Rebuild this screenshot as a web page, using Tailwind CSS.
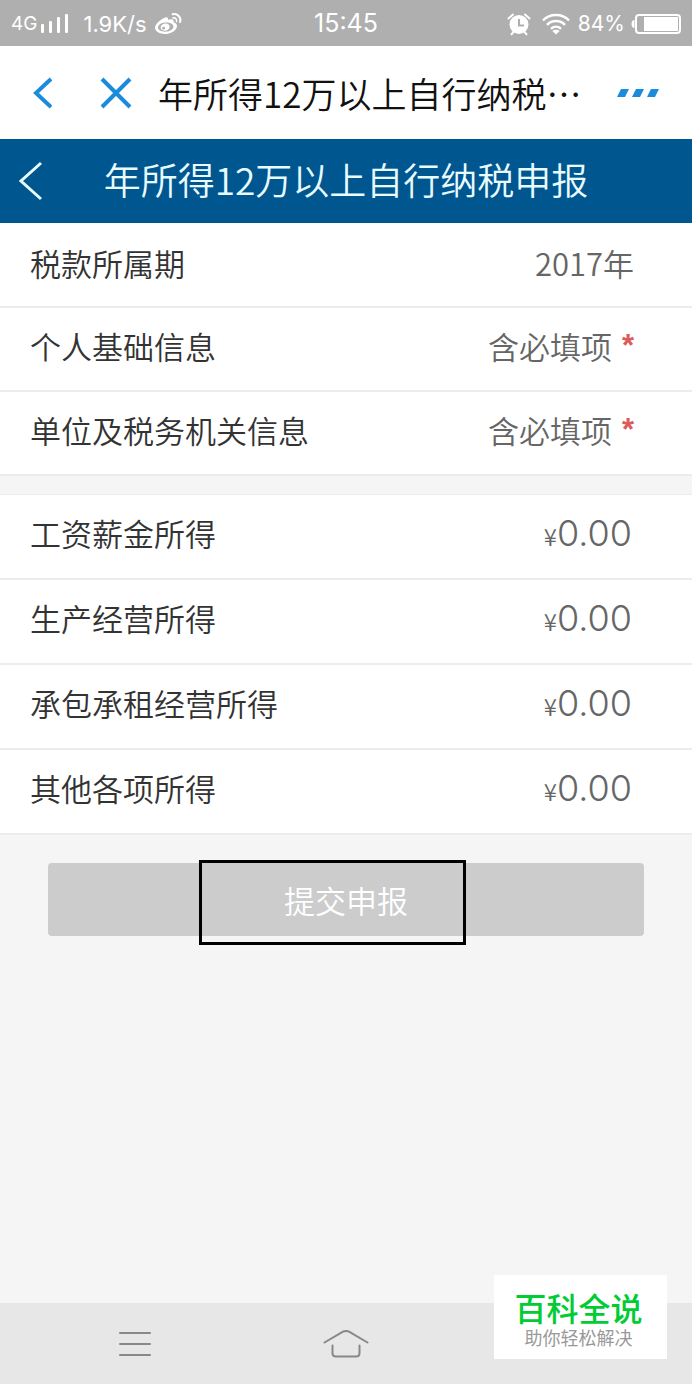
<!DOCTYPE html>
<html lang="zh-CN">
<head>
    <meta charset="UTF-8">
    <meta name="viewport" content="width=device-width, initial-scale=1.0">
    <title>年所得12万以上自行纳税申报</title>
    <script src="https://cdn.jsdelivr.net/npm/@tailwindcss/browser@4"></script>
</head>
<body class="font-['Noto_Sans_CJK_SC',sans-serif] font-[350] bg-[#f5f5f5]">
    <div class="flex flex-col min-h-screen">

        <!-- Status bar -->
        <div class="grid grid-cols-[1fr_auto_1fr] items-center h-[46px] px-[11px] pt-[2px] bg-[#afafaf] text-white font-['Inter',sans-serif] font-normal text-[22px]">
            <div class="flex items-center">
                <span class="text-[19px]">4G</span>
                <svg class="w-7 h-5 ml-1" viewBox="0 0 28 20" fill="currentColor">
                    <rect x="0" y="10" width="3" height="9" rx="1"/>
                    <rect x="8" y="7" width="3" height="12" rx="1"/>
                    <rect x="16" y="3" width="3" height="16" rx="1"/>
                    <rect x="24" y="0" width="3" height="19" rx="1"/>
                </svg>
                <span class="ml-[14px]">1.9K/s</span>
                <svg class="w-7 h-6 ml-2" viewBox="0 0 28 24" fill="none" stroke="currentColor">
                    <path fill="currentColor" stroke="none" fill-rule="evenodd" d="M9 6c2.500-1.500 4.500-.8 4 1.800 3.500-1.300 6.500-.6 5.600 2.400 3 .9 4.200 3 2.900 5.800C19.800 19.500 15.200 22 10 22 4.500 22 0 19.500 0 15.800 0 12.500 4.500 8.200 9 6ZM10.300 10.500c-4.300.3-7.600 2.700-7.300 5.300.3 2.500 3.900 4.200 8.200 3.800s7.500-2.900 7.200-5.400c-.3-2.500-3.900-4-8.100-3.700Z"/>
                    <path fill="currentColor" stroke="none" fill-rule="evenodd" d="M10.500 11.500c3 0 4.800 2 4 4.200-.8 2.300-3.500 3.500-6 2.900-2.400-.6-3.500-2.700-2.500-4.600.7-1.500 2.500-2.500 4.500-2.500ZM8.600 14.800a1.500 1.300 0 1 0 .1 2.600 1.500 1.300 0 0 0-.1-2.600Z"/>
                    <path stroke-width="2" stroke-linecap="round" d="M17.500 2.300c5-1.200 9 3 7.600 7.700"/>
                    <path stroke-width="1.500" stroke-linecap="round" d="M18 6c2.500-.6 4.200 1.300 3.500 3.600"/>
                </svg>
            </div>
            <div class="text-[25px]">15:45</div>
            <div class="flex items-center justify-end text-[21px]">
                <svg class="w-6 h-6" viewBox="0 0 24 24" fill="none" stroke="currentColor">
                    <circle cx="12" cy="12.500" r="9.500" fill="currentColor" stroke="none"/>
                    <path stroke="#afafaf" stroke-width="2" d="M12 7v6.500h5"/>
                    <path stroke-width="2" stroke-linecap="round" d="M1.500 6.500 6 2.500M22.500 6.500 18 2.500M6 20.500l-1.500 1.800M18 20.500l1.500 1.800"/>
                </svg>
                <svg class="w-7 h-6 ml-[11px]" viewBox="0 0 28 24" fill="none" stroke="currentColor" stroke-width="2.500">
                    <path d="M1 8.500c7-7.300 19-7.300 26 0M5 12.800c5-5 13-5 18 0M9 16.800c3-2.800 7-2.800 10 0"/>
                    <path fill="currentColor" stroke="none" d="M14 22.500 10.300 19c2-1.700 5.400-1.700 7.400 0Z"/>
                </svg>
                <span class="ml-2">84%</span>
                <svg class="w-[50px] h-5 ml-[6px]" viewBox="0 0 50 20" fill="none">
                    <path fill="currentColor" d="M3.500 6v8C1.500 14 .5 12.500 .5 10s1-4 3-4Z"/>
                    <rect x="5" y="1" width="44" height="18" rx="3" stroke="currentColor" stroke-width="2"/>
                    <path fill="currentColor" d="M13 3h34v14H13z"/>
                </svg>
            </div>
        </div>

        <!-- Browser title bar -->
        <header class="flex items-center h-[93px] pl-8 pr-[33px] bg-white text-[#1b8cdb]">
            <button aria-label="返回">
                <svg class="w-5 h-8" viewBox="0 0 20 32" fill="none" stroke="currentColor" stroke-width="4"><path d="M19 2 4 16l15 14"/></svg>
            </button>
            <button aria-label="关闭" class="ml-12">
                <svg class="w-8 h-8" viewBox="0 0 32 32" fill="none" stroke="currentColor" stroke-width="4"><path d="m2 2 28 28M30 2 2 30"/></svg>
            </button>
            <div class="grow ml-[26px] text-[35px] leading-none text-[#111] whitespace-nowrap">年所得12万以上自行纳税…</div>
            <button aria-label="更多">
                <svg class="w-[42px] h-2" viewBox="0 0 42 8" fill="currentColor"><path d="M4 0h8L8 8H0ZM19 0h8l-4 8h-8ZM34 0h8l-4 8h-8Z"/></svg>
            </button>
        </header>

        <!-- Page title bar -->
        <div class="relative flex items-center justify-center h-[84px] pb-1 bg-[#00568f] text-[#e8fbff]">
            <button aria-label="返回" class="absolute left-[18px] top-[22px]">
                <svg class="w-6 h-10" viewBox="0 0 24 40" fill="none" stroke="currentColor" stroke-width="3"><path d="M23 2 3 20l20 18"/></svg>
            </button>
            <h1 class="text-[37px] leading-none">年所得12万以上自行纳税申报</h1>
        </div>

        <ul class="bg-white text-[31px] leading-none text-[#333]">
            <li class="flex items-center justify-between h-[85px] pl-[30px] pr-[58px] pb-1 border-b-2 border-[#ececec]">
                <span>税款所属期</span>
                <span class="text-[#666]">2017年</span>
            </li>
            <li class="border-b-2 border-[#ececec]">
                <a href="#" class="flex items-center justify-between h-[82px] pl-[30px] pr-[58px] pb-2">
                    <span>个人基础信息</span>
                    <span class="flex items-center text-[#666]">含必填项<span class="ml-[10px] font-['Liberation_Sans',sans-serif] font-bold text-[#dd5a5a]">*</span></span>
                </a>
            </li>
            <li class="border-b-2 border-[#ececec]">
                <a href="#" class="flex items-center justify-between h-[82px] pl-[30px] pr-[58px] pb-2">
                    <span>单位及税务机关信息</span>
                    <span class="flex items-center text-[#666]">含必填项<span class="ml-[10px] font-['Liberation_Sans',sans-serif] font-bold text-[#dd5a5a]">*</span></span>
                </a>
            </li>
        </ul>

        <ul class="mt-[18px] bg-white text-[31px] leading-none text-[#333] border-t border-[#ececec]">
            <li class="border-b-2 border-[#ececec]">
                <a href="#" class="flex items-center justify-between h-[83px] pl-[30px] pr-[60px] pb-2">
                    <span>工资薪金所得</span>
                    <span class="flex items-baseline text-[#666]"><span class="text-2xl leading-none">¥</span><span class="font-['Inter',sans-serif] text-[36px]">0.00</span></span>
                </a>
            </li>
            <li class="border-b-2 border-[#ececec]">
                <a href="#" class="flex items-center justify-between h-[83px] pl-[30px] pr-[60px] pb-2">
                    <span>生产经营所得</span>
                    <span class="flex items-baseline text-[#666]"><span class="text-2xl leading-none">¥</span><span class="font-['Inter',sans-serif] text-[36px]">0.00</span></span>
                </a>
            </li>
            <li class="border-b-2 border-[#ececec]">
                <a href="#" class="flex items-center justify-between h-[83px] pl-[30px] pr-[60px] pb-2">
                    <span>承包承租经营所得</span>
                    <span class="flex items-baseline text-[#666]"><span class="text-2xl leading-none">¥</span><span class="font-['Inter',sans-serif] text-[36px]">0.00</span></span>
                </a>
            </li>
            <li class="border-b-2 border-[#ececec]">
                <a href="#" class="flex items-center justify-between h-[83px] pl-[30px] pr-[60px] pb-2">
                    <span>其他各项所得</span>
                    <span class="flex items-baseline text-[#666]"><span class="text-2xl leading-none">¥</span><span class="font-['Inter',sans-serif] text-[36px]">0.00</span></span>
                </a>
            </li>
        </ul>

        <div class="relative mx-12 mt-7 mb-12">
            <button class="w-full h-[73px] rounded bg-[#ccc] text-white text-[31px] leading-none">提交申报</button>
            <!-- Highlight frame over the submit button -->
            <div class="absolute left-[151px] -top-[3px] w-[267px] h-[85px] border-3 border-black pointer-events-none"></div>
        </div>

        <!-- System navigation bar -->
        <nav class="relative mt-auto grid grid-cols-3 items-center h-[81px] px-[30px] bg-[#e7e7e7] text-[#888]">
            <button aria-label="菜单" class="justify-self-center">
                <svg class="w-8 h-7" viewBox="0 0 32 28" fill="none" stroke="currentColor" stroke-width="2" stroke-linecap="round"><path d="M1 3h30M1 14h30M1 25h30"/></svg>
            </button>
            <button aria-label="主页" class="justify-self-center">
                <svg class="w-[46px] h-7" viewBox="0 0 46 28" fill="none" stroke="currentColor" stroke-width="2" stroke-linecap="round" stroke-linejoin="round"><path d="M1.500 12.500 20 1.700q3-1.400 6 0l18.500 10.800M9.500 15.500V23q0 3.500 3.500 3.500h20q3.500 0 3.500-3.500v-7.500"/></svg>
            </button>
            <div class="absolute right-[25px] bottom-[25px] flex flex-col items-center justify-center w-[173px] h-[84px] pt-2 pr-1 bg-white whitespace-nowrap">
                <span class="text-[32px] leading-8 font-medium text-[#0c3]">百科全说</span>
                <span class="text-lg leading-7 font-normal text-[#999]">助你轻松解决</span>
            </div>
        </nav>
    </div>
</body>
</html>
